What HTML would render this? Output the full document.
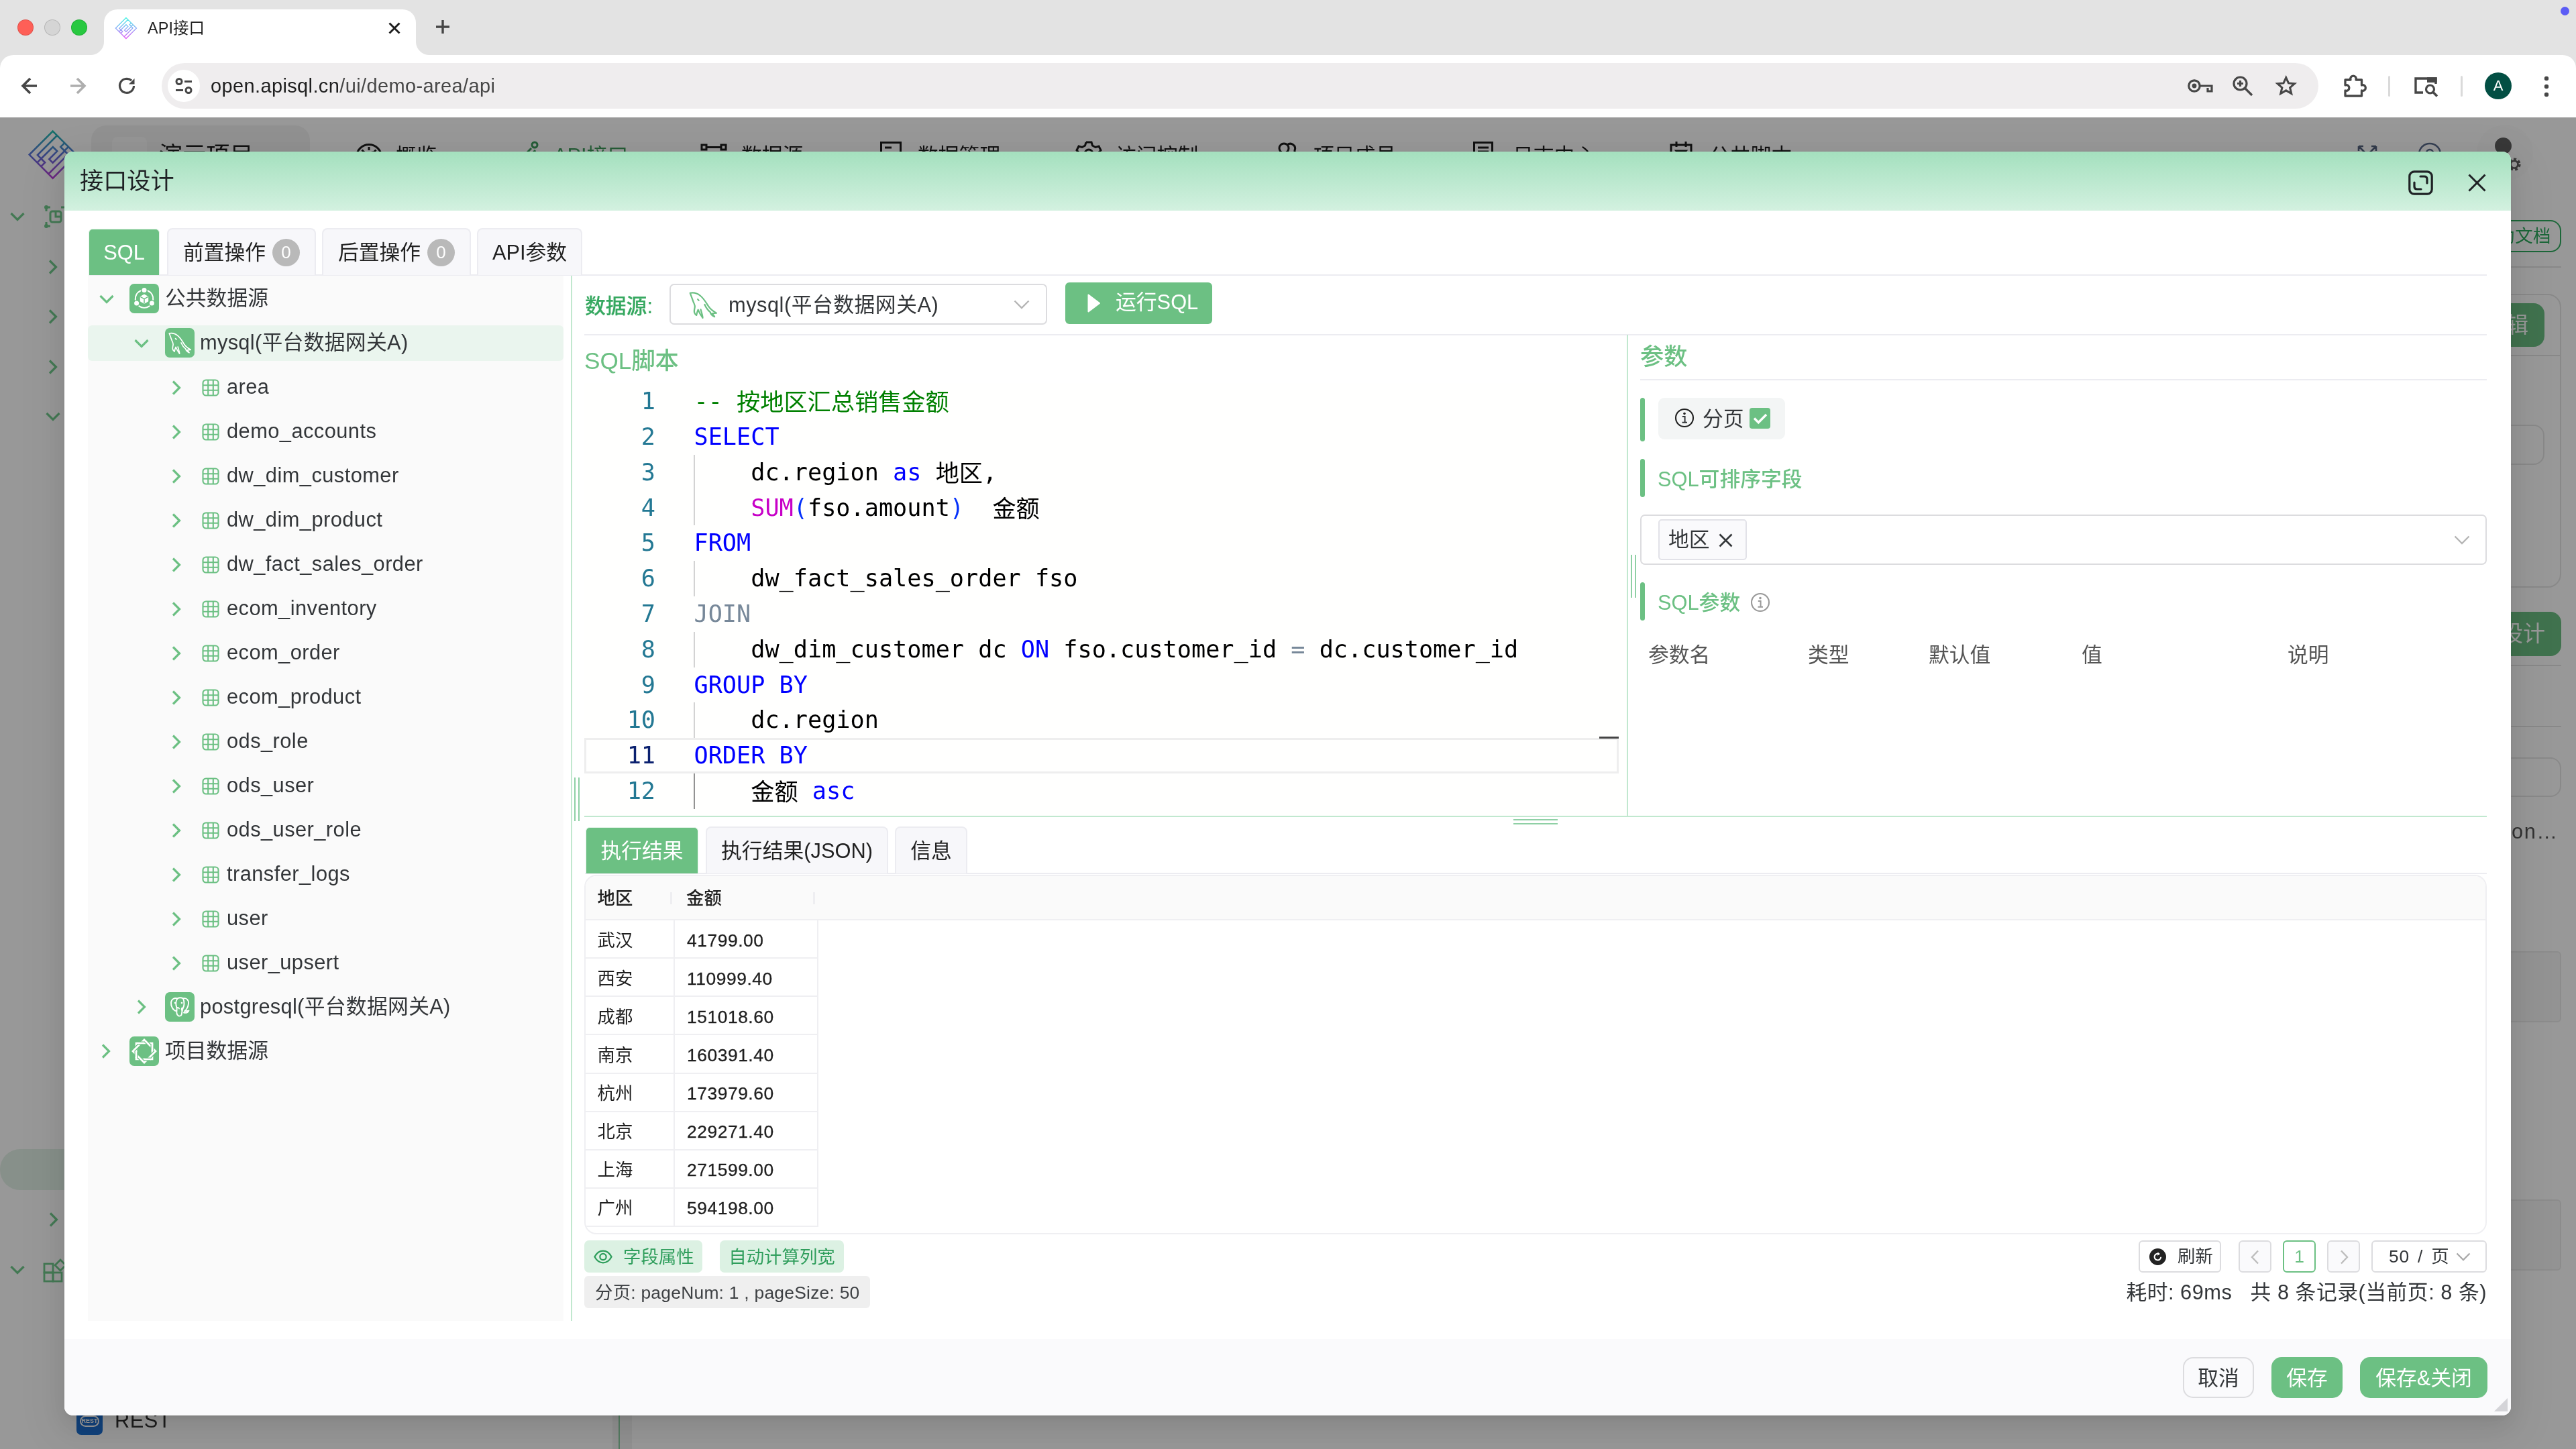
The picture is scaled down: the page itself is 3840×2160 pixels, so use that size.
<!DOCTYPE html>
<html lang="zh-CN">
<head>
<meta charset="utf-8">
<title>API接口</title>
<style>
*{box-sizing:border-box;margin:0;padding:0}
html,body{width:3840px;height:2160px;overflow:hidden;background:#fff}
body{position:relative;font-family:"Liberation Sans","Noto Sans CJK SC",sans-serif;color:#222;font-size:30.8px;-webkit-font-smoothing:antialiased}
#root{position:absolute;left:0;top:0;width:3840px;height:2160px;will-change:transform}
.abs{position:absolute}
svg{display:block;overflow:visible}
.fx{display:flex;align-items:center}
/* ---------- browser chrome ---------- */
#tabbar{position:absolute;left:0;top:0;width:3840px;height:110px;background:#e3e3e3}
#toolbar{position:absolute;left:0;top:82px;width:3840px;height:93px;background:#fff;border-radius:20px 20px 0 0}
#tab{position:absolute;left:155px;top:14px;width:465px;height:68px;background:#fff;border-radius:20px 20px 0 0}
#tab:before,#tab:after{content:"";position:absolute;bottom:0;width:20px;height:20px;background:radial-gradient(circle at 0 0,transparent 19.5px,#fff 20.5px)}
#tab:before{left:-20px}
#tab:after{right:-20px;background:radial-gradient(circle at 100% 0,transparent 19.5px,#fff 20.5px)}
.tl{position:absolute;top:29px;width:24px;height:24px;border-radius:50%}
#omni{position:absolute;left:241px;top:94px;width:3215px;height:68px;border-radius:34px;background:#efedee}
#url{position:absolute;left:314px;top:94px;height:68px;line-height:68px;font-size:29px;color:#474747;letter-spacing:0.37px}
#url b{font-weight:normal;color:#1f1f1f}
/* ---------- page under mask ---------- */
#page{position:absolute;left:0;top:175px;width:3840px;height:1985px;background:#fff;overflow:hidden}
#mask{position:absolute;left:0;top:175px;width:3840px;height:1985px;background:rgba(0,0,0,.405)}
.nav{position:absolute;top:32px;height:50px;line-height:50px;font-size:35.2px;color:#1f1f1f;white-space:nowrap}
/* ---------- modal ---------- */
#modal{position:absolute;left:96px;top:226px;width:3647px;height:1884px;background:#fff;border-radius:13px;overflow:hidden;box-shadow:0 7px 13px -9px rgba(0,0,0,.12),0 13px 35px 0 rgba(0,0,0,.08),0 20px 62px 18px rgba(0,0,0,.05)}
#mhead{position:absolute;left:0;top:0;width:100%;height:88px;background:linear-gradient(#a4e0be,#d3f1e0)}
#mtitle{position:absolute;left:23px;top:0;height:88px;line-height:88px;font-size:35.2px;color:#1f2225}
#mfoot{position:absolute;left:0;top:1770px;width:100%;height:114px;background:#fafafc}

/* ---------- modal content (global coords via #mc) ---------- */
#mc{position:absolute;left:-96px;top:-226px;width:3840px;height:2160px}
#mc>div,#mc>svg{position:absolute}
.tab{top:340px;height:70px;border:2px solid #ececf1;border-bottom:none;background:#f7f7fa;border-radius:8px 8px 0 0;line-height:70px;text-align:center;color:#222;white-space:nowrap}
.tab.on{background:#6cc083;color:#fff;border-color:#e4f3e9;border-width:1px 1px 0 1px;top:341px;height:69px;line-height:70px;border-radius:6px 6px 0 0}
.badge{display:inline-block;width:41px;height:41px;border-radius:50%;background:#b9b9b9;color:#fff;line-height:41px;font-size:26px;text-align:center;vertical-align:middle;margin:-4px 0 0 10px}
#tree{left:131px;top:411px;width:709px;height:1558px;background:#fafafa;padding-top:1px}
.tr{position:relative;height:66px;white-space:nowrap}
.tr.sel:before{content:"";position:absolute;left:0;top:7px;width:709px;height:53px;background:#eaf5ee;border-radius:6px}
.tr .t{position:absolute;top:0;line-height:66px;color:#333639;letter-spacing:.45px}
.l0 .t{letter-spacing:0;margin-left:-1px}.l1 .t{letter-spacing:.3px;margin-left:0}
.tr svg,.tr .ib{position:absolute}
.ib{top:11px;width:44px;height:44px;border-radius:7px;background:#6cc083}
.l0 .cv{left:17px}.l0 .ib{left:62px}.l0 .t{left:116px}
.l1 .cv{left:69px}.l1 .ib{left:115px}.l1 .t{left:167px}
.l2 .cv{left:125px;top:23px}.l2 .tb{left:170px;top:21px}.l2 .t{left:207px}
.cvd{top:27px}
.g{color:#6cc083}
.hl{background:#ececf1;height:2px}

/* editor */
#code{left:871px;top:572.2px;width:1541px;height:634px;font-family:"DejaVu Sans Mono","Noto Sans CJK SC",monospace;font-size:35.2px;line-height:52.8px;color:#000}
#code .ln{position:relative;height:52.8px}
#code .n{position:absolute;left:0;top:0;width:106px;text-align:right;color:#237893}
#code .c{position:absolute;left:163.5px;top:0;white-space:pre}
#code .ig:before{content:"";position:absolute;left:163px;top:0;width:2px;height:52.8px;background:#d3d3d3}
#code .ig.act:before{background:#939393}
.zh{position:relative;top:2px}.k{color:#0000ff}.cm{color:#008000}.fn{color:#c700c7}.op{color:#778899}.br{color:#0431fa}
.gbar{width:7px;border-radius:4px;background:#6cc083}
.sec{font-weight:500;margin-top:1.5px;color:#6cc083;white-space:nowrap;line-height:56px;height:56px}
.th{color:#555;white-space:nowrap;line-height:50px;height:50px;top:952px}

/* results */
.rtab{top:1232px;height:70px;border:2px solid #ececf1;border-bottom:none;background:#f7f7fa;border-radius:8px 8px 0 0;line-height:69px;text-align:center;color:#222;white-space:nowrap}
.rtab.on{background:#6cc083;color:#fff;border-color:#e4f3e9;border-width:1px 1px 0 1px;top:1233px;height:69px;line-height:69px;border-radius:6px 6px 0 0}
#grid{left:870.500px;top:1304px;width:2836.500px;height:536px;border:2px solid #efeff2;border-radius:18px;background:#fff;overflow:hidden;font-size:26.4px}
#ghead{position:absolute;left:0;top:0;width:100%;height:66px;background:#fafafa;border-bottom:2px solid #efeff2}
#ghead span{position:absolute;top:0;line-height:66px;font-weight:500;color:#1f1f1f}
#ghead i{position:absolute;top:24px;width:3px;height:18px;background:#eeeef1}
.gr{position:absolute;left:0;width:347.500px;height:57.14px;border-bottom:2px solid #efeff2;border-right:2px solid #efeff2}
.gr span{position:absolute;top:1.5px;line-height:57px;color:#1f1f1f}
.gr span+i+span{letter-spacing:.55px;-webkit-text-stroke:.3px #1f1f1f}
.gr i{position:absolute;left:131.500px;top:0;width:2px;height:100%;background:#efeff2}
.btnl{height:48px;border-radius:7px;background:#dcf1e3;color:#2f9e5c;line-height:51px;white-space:nowrap;font-size:26.4px}
.pbtn{top:1849px;height:48px;border:2px solid #dcdcdf;border-radius:6px;background:#fff}
.fbtn{top:2023px;height:61px;border-radius:15px;line-height:63px;text-align:center;white-space:nowrap;font-size:30.8px}

.l0 .cvr{left:20px;top:22px}.l1 .cvr{left:73px;top:22px}
/* page bg */
#pg{position:absolute;left:0;top:-175px;width:3840px;height:2160px}
#pg>div,#pg>svg{position:absolute}
.nv{top:208px;height:50px;line-height:50px;font-size:30.8px;color:#1f1f1f;white-space:nowrap}
.gbtn{background:#6cc083;color:#fff;border-radius:16px;white-space:nowrap;text-align:right;font-size:33px}
.obox{border:2px solid #e6e6e6;border-radius:16px}
</style>
</head>
<body>
<div id="root">
<!-- ================= BROWSER CHROME ================= -->
<div id="tabbar">
  <div class="tl" style="left:26px;background:#fe5f57;box-shadow:inset 0 0 0 1px rgba(0,0,0,.12)"></div>
  <div class="tl" style="left:66px;background:#d5d5d5;box-shadow:inset 0 0 0 1px rgba(0,0,0,.14)"></div>
  <div class="tl" style="left:106px;background:#28c840;box-shadow:inset 0 0 0 1px rgba(0,0,0,.12)"></div>
  <div id="tab"></div>
</div>
<div id="toolbar"></div>
<div id="omni"></div>

<!-- tab content -->
<svg class="abs" style="left:171px;top:25px" width="34" height="34" viewBox="0 0 34 34"><defs><linearGradient id="fg" gradientUnits="userSpaceOnUse" x1="0" y1="0" x2="22" y2="22"><stop offset="0" stop-color="#49f5e3"/><stop offset=".5" stop-color="#90b2f8"/><stop offset="1" stop-color="#e45cf6"/></linearGradient></defs><g transform="translate(16.900,1.400) rotate(45)"><path d="M0 0H22V22H0ZM4 0V18.300H7.400M7.400 18.300H11V22M7.400 18.300V22M7.400 18.300V7.300H11.400V14.800H14.800V3.700M18 22V3.700H14.600M14.600 3.700H11V0M14.600 3.700V0" fill="none" stroke="url(#fg)" stroke-width="1.400" stroke-linejoin="miter"/></g></svg>
<div class="abs" style="left:220px;top:14px;height:56px;line-height:56px;font-size:23.400px;color:#1f1f1f;letter-spacing:.1px">API接口</div>
<svg class="abs" style="left:579px;top:33px" width="18" height="18" viewBox="0 0 18 18"><path d="M1.500 1.500 16.500 16.500M16.500 1.500 1.500 16.500" stroke="#1f1f1f" stroke-width="2.900" fill="none"/></svg>
<svg class="abs" style="left:649px;top:29px" width="22" height="22" viewBox="0 0 22 22"><path d="M11 1V21M1 11H21" stroke="#474747" stroke-width="3.4" fill="none"/></svg>
<div class="abs" style="left:3817px;top:10px;width:13px;height:13px;border-radius:50%;background:#5b5cf5"></div>
<!-- toolbar icons -->
<svg class="abs" style="left:31px;top:113px" width="26" height="30" viewBox="0 0 26 30"><path d="M24 15H3M14 4 3 15 14 26" stroke="#474747" stroke-width="3.6" fill="none" stroke-linejoin="miter"/></svg>
<svg class="abs" style="left:103px;top:113px" width="26" height="30" viewBox="0 0 26 30"><path d="M2 15H23M12 4 23 15 12 26" stroke="#aeaeae" stroke-width="3.6" fill="none"/></svg>
<svg class="abs" style="left:175px;top:114px" width="28" height="28" viewBox="0 0 28 28"><path d="M24.500 14A10.500 10.500 0 1 1 21 6" stroke="#474747" stroke-width="3.200" fill="none"/><path d="M25.500 3V11.500H17Z" fill="#474747"/></svg>
<div class="abs" style="left:250px;top:104px;width:48px;height:48px;border-radius:50%;background:#fff"></div>
<svg class="abs" style="left:261px;top:116px" width="26" height="24" viewBox="0 0 26 24"><g stroke="#474747" stroke-width="3" fill="none"><circle cx="6" cy="5.5" r="4"/><path d="M14 5.5H25"/><circle cx="20" cy="18.5" r="4"/><path d="M1 18.5H12"/></g></svg>
<!-- right icons -->
<svg class="abs" style="left:3261px;top:115px" width="38" height="26" viewBox="0 0 38 26"><g fill="none" stroke="#474747" stroke-width="3.2"><circle cx="10" cy="13" r="8.2"/><path d="M18 13H36V21H30V16"/></g><circle cx="10" cy="13" r="3.4" fill="#474747"/></svg>
<svg class="abs" style="left:3327px;top:112px" width="32" height="32" viewBox="0 0 32 32"><g fill="none" stroke="#474747" stroke-width="3.2"><circle cx="12.5" cy="12.5" r="9.5"/><path d="M19.5 19.5 30 30M8 12.5H17M12.5 8V17"/></g></svg>
<svg class="abs" style="left:3393px;top:113px" width="29.500" height="28.500" viewBox="0 0 34 33"><path d="M17 3 21.3 12.6 31.7 13.6 23.8 20.5 26.2 30.7 17 25.3 7.8 30.7 10.2 20.5 2.3 13.6 12.7 12.6Z" fill="none" stroke="#474747" stroke-width="3.500" stroke-linejoin="miter"/></svg>
<svg class="abs" style="left:3492px;top:108px" width="36" height="38" viewBox="0 0 36 38"><path d="M4 11H12A4.300 4.300 0 1 1 20 11H28.500V19A4.300 4.300 0 1 1 28.500 27V35H4V27A4.300 4.300 0 1 0 4 19Z" fill="none" stroke="#474747" stroke-width="3.300" stroke-linejoin="round"/></svg>
<div class="abs" style="left:3560px;top:113px;width:3px;height:31px;background:#dadada;border-radius:2px"></div>
<svg class="abs" style="left:3598px;top:113px" width="38" height="32" viewBox="0 0 38 32"><path d="M14 25H3V4H33V12" fill="none" stroke="#474747" stroke-width="3.4"/><path d="M20 2.3H34.7V10H20Z" fill="#474747"/><circle cx="24.5" cy="20" r="6" fill="none" stroke="#474747" stroke-width="3.2"/><path d="M29 24.5 35 30.5" stroke="#474747" stroke-width="3.6"/></svg>
<div class="abs" style="left:3668px;top:113px;width:3px;height:31px;background:#dadada;border-radius:2px"></div>
<div class="abs" style="left:3704px;top:108px;width:40px;height:40px;border-radius:50%;background:#034f44;color:#fff;font-size:22px;line-height:40px;text-align:center">A</div>
<svg class="abs" style="left:3791px;top:113px" width="10" height="32" viewBox="0 0 10 32"><g fill="#474747"><circle cx="5" cy="4" r="3.2"/><circle cx="5" cy="16" r="3.2"/><circle cx="5" cy="28" r="3.2"/></g></svg>
<div id="url"><b>open.apisql.cn</b>/ui/demo-area/api</div>

<!-- ================= PAGE (dimmed) ================= -->
<div id="page"><div id="pg">
  <!-- logo -->
  <svg style="left:42px;top:193px" width="74" height="74" viewBox="0 0 74 74"><defs><linearGradient id="lg" gradientUnits="userSpaceOnUse" x1="0" y1="0" x2="22" y2="22"><stop offset="0" stop-color="#22c0b0"/><stop offset=".5" stop-color="#5c74dc"/><stop offset="1" stop-color="#bb3fd8"/></linearGradient></defs><g transform="translate(36.700,2.600) rotate(45) scale(2.250)"><path d="M0 0H22V22H0ZM4 0V18.300H7.400M7.400 18.300H11V22M7.400 18.300V22M7.400 18.300V7.300H11.400V14.800H14.800V3.700M18 22V3.700H14.600M14.600 3.700H11V0M14.600 3.700V0" fill="none" stroke="url(#lg)" stroke-width="1.150"/></g></svg>
  <!-- project switcher -->
  <div style="left:136px;top:187px;width:326px;height:90px;border-radius:22px;background:#f3f3f3"></div>
  <div style="left:167px;top:204px;width:52px;height:52px;border-radius:8px;background:#fafafa"></div>
  <div class="nv" style="left:237px;font-size:35.2px;top:207px">演示项目</div>
  <div style="left:404px;top:229px;width:20px;height:3px;background:#1f1f1f"></div>
  <!-- nav -->
  <svg style="left:529px;top:213px" width="42" height="42" viewBox="0 0 42 42"><g fill="none" stroke="#1f1f1f" stroke-width="3"><circle cx="21" cy="21" r="18.500"/><path d="M21 6V11M10.500 10.500 14 14M31.500 10.500 28 14M21 21 27 13"/></g></svg>
  <div class="nv" style="left:590px">概览</div>
  <svg style="left:768px;top:210px" width="40" height="44" viewBox="0 0 40 44"><g fill="none" stroke="#3f9c5d" stroke-width="3"><path d="M5 30 24 11"/><circle cx="29" cy="6" r="4"/><path d="M3 40C8 28 20 26 30 14"/></g></svg>
  <div class="nv" style="left:825px;color:#3f9c5d">API接口</div>
  <svg style="left:1044px;top:214px" width="40" height="30" viewBox="0 0 40 30"><g fill="none" stroke="#1f1f1f" stroke-width="3"><rect x="2" y="2" width="7" height="7"/><rect x="31" y="2" width="7" height="7"/><path d="M9 5.500H31"/></g></svg>
  <div class="nv" style="left:1105px">数据源</div>
  <svg style="left:1312px;top:211px" width="32" height="40" viewBox="0 0 32 40"><g fill="none" stroke="#1f1f1f" stroke-width="3"><rect x="1.500" y="1.500" width="29" height="34"/><path d="M7 9H17"/></g></svg>
  <div class="nv" style="left:1368px">数据管理</div>
  <svg style="left:1604px;top:210px" width="38" height="40" viewBox="0 0 38 40"><g fill="none" stroke="#1f1f1f" stroke-width="3"><path d="M15 2H23L24.500 7 29 9.500 34 8 37 14 33 18V22"/><path d="M15 2 13.500 7 9 9.500 4 8 1 14 5 18V22"/><circle cx="19" cy="19" r="6"/></g></svg>
  <div class="nv" style="left:1663px">访问控制</div>
  <svg style="left:1903px;top:212px" width="32" height="36" viewBox="0 0 32 36"><g fill="none" stroke="#1f1f1f" stroke-width="3"><circle cx="11" cy="9" r="7"/><path d="M16 4A7 7 0 0 1 27 12V20"/></g></svg>
  <div class="nv" style="left:1958px">项目成员</div>
  <svg style="left:2196px;top:211px" width="30" height="40" viewBox="0 0 30 40"><g fill="none" stroke="#1f1f1f" stroke-width="3"><rect x="1.500" y="1.500" width="27" height="36"/><path d="M7 9H23M7 15H23"/></g></svg>
  <div class="nv" style="left:2255px">日志中心</div>
  <svg style="left:2489px;top:209px" width="34" height="40" viewBox="0 0 34 40"><g fill="none" stroke="#1f1f1f" stroke-width="3"><path d="M2 7H32V38H2Z"/><path d="M10 2V10M24 2V10M10 16 24 16 17 24Z"/></g></svg>
  <div class="nv" style="left:2548px">公共脚本</div>
  <svg style="left:3513px;top:215px" width="32" height="32" viewBox="0 0 32 32"><g fill="none" stroke="#566580" stroke-width="2.600"><path d="M3 3 13 13M29 3 19 13M3 3H10M3 3V10M29 3H22M29 3V10"/></g></svg>
  <svg style="left:3604px;top:212px" width="36" height="36" viewBox="0 0 36 36"><g fill="none" stroke="#5c6c8c" stroke-width="2.600"><circle cx="18" cy="18" r="16"/><circle cx="18" cy="16" r="5"/></g></svg>
  <div style="left:3692px;top:186px;width:84px;height:84px;border-radius:50%;background:#fcfcfc"></div>
  <div style="left:3719px;top:205px;width:25px;height:25px;border-radius:50%;background:#5e5e5e"></div>
  <svg style="left:3737px;top:234px" width="22" height="22" viewBox="0 0 24 24"><g fill="none" stroke="#606060" stroke-width="5" stroke-dasharray="4 3.300"><circle cx="12" cy="12" r="8"/></g><circle cx="12" cy="12" r="6" fill="none" stroke="#606060" stroke-width="3"/></svg>
  <!-- left sidebar -->
  <svg style="left:15px;top:316px" width="22" height="14" viewBox="0 0 22 14"><path d="M1.5 2 11 11.500 20.500 2" fill="none" stroke="#72cc8e" stroke-width="3.2"/></svg>
  <svg style="left:66px;top:306px" width="34" height="34" viewBox="0 0 34 34"><g fill="none" stroke="#72cc8e" stroke-width="3"><rect x="9" y="9" width="16" height="16" rx="3"/><path d="M9 3H3V9M3 25V31H9M25 3H31"/><path d="M17 9V17H25"/></g><g fill="#72cc8e"><circle cx="3" cy="3" r="3"/><circle cx="3" cy="31" r="3"/></g></svg>
  <svg style="left:72px;top:387px" width="14" height="22" viewBox="0 0 14 22"><path d="M2 1.5 11.5 11 2 20.500" fill="none" stroke="#72cc8e" stroke-width="3.2"/></svg><svg style="left:72px;top:461px" width="14" height="22" viewBox="0 0 14 22"><path d="M2 1.5 11.5 11 2 20.500" fill="none" stroke="#72cc8e" stroke-width="3.2"/></svg><svg style="left:72px;top:536px" width="14" height="22" viewBox="0 0 14 22"><path d="M2 1.5 11.5 11 2 20.500" fill="none" stroke="#72cc8e" stroke-width="3.2"/></svg><svg style="left:68px;top:614px" width="22" height="14" viewBox="0 0 22 14"><path d="M1.5 2 11 11.500 20.500 2" fill="none" stroke="#72cc8e" stroke-width="3.2"/></svg>
  <div style="left:0;top:1713px;width:300px;height:61px;border-radius:30px;background:#e3f1e7"></div>
  <svg style="left:73px;top:1807px" width="14" height="22" viewBox="0 0 14 22"><path d="M2 1.5 11.5 11 2 20.500" fill="none" stroke="#72cc8e" stroke-width="3.2"/></svg><svg style="left:15px;top:1886px" width="22" height="14" viewBox="0 0 22 14"><path d="M1.5 2 11 11.500 20.500 2" fill="none" stroke="#72cc8e" stroke-width="3.2"/></svg>
  <svg style="left:64px;top:1876px" width="36" height="36" viewBox="0 0 36 36"><g fill="none" stroke="#72cc8e" stroke-width="2.800"><rect x="2" y="8" width="13" height="13"/><rect x="2" y="21" width="13" height="13"/><rect x="15" y="21" width="13" height="13"/><path d="M18 10 26 2 34 10 26 18Z"/></g></svg>
  <div style="left:114px;top:2100px;width:39px;height:39px;border-radius:7px;background:#1e6fd0"></div>
  <div style="left:119px;top:2110px;width:29px;height:17px;border:2px solid #fff;border-radius:9px;color:#fff;font-size:9px;line-height:13px;text-align:center;font-weight:bold">REST</div>
  <div style="left:171px;top:2093px;height:50px;line-height:50px;font-size:30.8px;color:#333;letter-spacing:.5px">REST</div>
  <div style="left:913px;top:2100px;width:29px;height:60px;background:#f4f4f4"></div>
  <div style="left:922px;top:2100px;width:2px;height:60px;background:#8fcfa4"></div>
  <!-- right sidebar -->
  <div class="obox" style="left:3560px;top:328px;width:258px;height:48px;border-color:#2fae60;border-radius:16px;color:#2fae60;font-size:26.400px;line-height:44px;text-align:right;padding-right:13px;white-space:nowrap;letter-spacing:.5px">帮助文档</div>
  <div style="left:3700px;top:397px;width:118px;height:2px;background:#e4e4e4"></div>
  <div class="obox" style="left:3500px;top:438px;width:318px;height:438px;border-radius:20px"></div>
  <div style="left:3700px;top:529px;width:116px;height:2px;background:#e4e4e4"></div>
  <div class="gbtn" style="left:3600px;top:452px;width:193px;height:65px;line-height:65px;padding-right:24px">编辑</div>
  <div class="obox" style="left:3500px;top:633px;width:293px;height:60px"></div>
  <div class="gbtn" style="left:3600px;top:912px;width:218px;height:66px;line-height:66px;padding-right:24px">设计</div>
  <div style="left:3700px;top:991px;width:118px;height:2px;background:#e4e4e4"></div>
  <div style="left:3700px;top:1082px;width:118px;height:2px;background:#e4e4e4"></div>
  <div class="obox" style="left:3500px;top:1129px;width:318px;height:59px"></div>
  <div style="left:3744px;top:1215px;height:50px;line-height:50px;font-size:30.8px;color:#555;white-space:nowrap;letter-spacing:1.5px">on…</div>
  <div class="obox" style="left:3500px;top:1418px;width:318px;height:106px;border-radius:6px;background:#f7f7f7;border-color:#ebebeb"></div>
  <div class="obox" style="left:3500px;top:1788px;width:318px;height:106px;border-radius:6px;background:#f7f7f7;border-color:#ebebeb"></div>
</div></div>
<div id="mask"></div>

<!-- ================= MODAL ================= -->
<div id="modal">
  <div id="mhead"><div id="mtitle">接口设计</div></div>
  <div id="mfoot"></div>
<div id="mc">
  <!-- header buttons -->
  <svg style="left:3590px;top:254px" width="37" height="37" viewBox="0 0 37 37"><g fill="none" stroke="#1f2225" stroke-width="3.2"><rect x="1.8" y="1.8" width="33.4" height="33.4" rx="7"/><path d="M18 9H24Q28 9 28 13V19M19 28H13Q9 28 9 24V18" stroke-linecap="round"/></g></svg>
  <svg style="left:3679px;top:259px" width="27" height="27" viewBox="0 0 27 27"><path d="M1.5 1.5 25.5 25.5M25.5 1.5 1.5 25.5" stroke="#1f2225" stroke-width="3" fill="none"/></svg>
  <!-- top tabs -->
  <div class="hl" style="left:132px;top:409px;width:3575px"></div>
  <div class="tab on" style="left:132px;width:106px">SQL</div>
  <div class="tab" style="left:249px;width:222px">前置操作<span class="badge">0</span></div>
  <div class="tab" style="left:480px;width:222px">后置操作<span class="badge">0</span></div>
  <div class="tab" style="left:711px;width:157px">API参数</div>
  <!-- tree -->
  <div id="tree">
    <div class="tr l0"><svg class="cv cvd" width="22" height="14" viewBox="0 0 22 14"><path d="M1.5 2 11 11.5 20.5 2" fill="none" stroke="#6cc083" stroke-width="3.2"/></svg><div class="ib"><svg style="left:0;top:0" width="44" height="44" viewBox="0 0 44 44"><g fill="none" stroke="#fff" stroke-width="2.1" stroke-linecap="round"><path d="M27.6 10.5A13.300 13.300 0 0 1 35.200 23.600M29.600 33.400A13.300 13.300 0 0 1 14.400 33.400M8.800 23.600A13.300 13.300 0 0 1 16.400 10.500"/></g><g fill="#fff"><circle cx="22" cy="9.400" r="3.500"/><circle cx="33.400" cy="29" r="3.500"/><circle cx="10.600" cy="29" r="3.500"/><path d="M22 15.500 28.200 19.100V26.300L22 29.900 15.800 26.300V19.100Z"/></g><path d="M16.300 19.400 22 22.700 27.700 19.400M22 22.700V29.400" fill="none" stroke="#6cc083" stroke-width="1.500"/></svg></div><span class="t">公共数据源</span></div>
    <div class="tr l1 sel"><svg class="cv cvd" width="22" height="14" viewBox="0 0 22 14"><path d="M1.5 2 11 11.5 20.5 2" fill="none" stroke="#6cc083" stroke-width="3.2"/></svg><div class="ib"><svg style="left:0;top:0" width="44" height="44" viewBox="0 0 44 44"><path d="M6.300 8C10 7.300 15 8.300 18.600 11.200C23 14.600 26 20 28.500 24C30.500 27 33.500 29.800 38.200 32.300L33.200 32.800L36 36.800C33 35.500 31.200 33.500 30.800 31.200C28 29 25.500 25.500 24 22M6.300 8C7.500 11 8.500 14 10 18C11 21 12.600 22.600 12 25.500C11.400 28.300 10.900 30 11.500 31.600C12 33 13 34.500 14 35C14.500 32.600 15 30.500 16 28.300C17 31 18.600 34.200 21.600 38.200C21.600 35 20 31.500 19.200 28M15.600 15.600 16.800 17" fill="none" stroke="#fff" stroke-width="1.700" stroke-linecap="round" stroke-linejoin="round"/></svg></div><span class="t">mysql(平台数据网关A)</span></div>
    <div class="tr l2"><svg class="cv" width="14" height="22" viewBox="0 0 14 22"><path d="M2 1.5 11.5 11 2 20.5" fill="none" stroke="#6cc083" stroke-width="3.2"/></svg><svg class="tb" width="26" height="26" viewBox="0 0 26 26"><g fill="none" stroke="#6cc083" stroke-width="2.1"><rect x="1.5" y="1.5" width="23" height="23" rx="4.5"/><path d="M9.2 1.5V24.5M16.8 1.5V24.5M1.5 9.2H24.5M1.5 16.8H24.5"/></g></svg><span class="t">area</span></div>
    <div class="tr l2"><svg class="cv" width="14" height="22" viewBox="0 0 14 22"><path d="M2 1.5 11.5 11 2 20.5" fill="none" stroke="#6cc083" stroke-width="3.2"/></svg><svg class="tb" width="26" height="26" viewBox="0 0 26 26"><g fill="none" stroke="#6cc083" stroke-width="2.1"><rect x="1.5" y="1.5" width="23" height="23" rx="4.5"/><path d="M9.2 1.5V24.5M16.8 1.5V24.5M1.5 9.2H24.5M1.5 16.8H24.5"/></g></svg><span class="t">demo_accounts</span></div>
    <div class="tr l2"><svg class="cv" width="14" height="22" viewBox="0 0 14 22"><path d="M2 1.5 11.5 11 2 20.5" fill="none" stroke="#6cc083" stroke-width="3.2"/></svg><svg class="tb" width="26" height="26" viewBox="0 0 26 26"><g fill="none" stroke="#6cc083" stroke-width="2.1"><rect x="1.5" y="1.5" width="23" height="23" rx="4.5"/><path d="M9.2 1.5V24.5M16.8 1.5V24.5M1.5 9.2H24.5M1.5 16.8H24.5"/></g></svg><span class="t">dw_dim_customer</span></div>
    <div class="tr l2"><svg class="cv" width="14" height="22" viewBox="0 0 14 22"><path d="M2 1.5 11.5 11 2 20.5" fill="none" stroke="#6cc083" stroke-width="3.2"/></svg><svg class="tb" width="26" height="26" viewBox="0 0 26 26"><g fill="none" stroke="#6cc083" stroke-width="2.1"><rect x="1.5" y="1.5" width="23" height="23" rx="4.5"/><path d="M9.2 1.5V24.5M16.8 1.5V24.5M1.5 9.2H24.5M1.5 16.8H24.5"/></g></svg><span class="t">dw_dim_product</span></div>
    <div class="tr l2"><svg class="cv" width="14" height="22" viewBox="0 0 14 22"><path d="M2 1.5 11.5 11 2 20.5" fill="none" stroke="#6cc083" stroke-width="3.2"/></svg><svg class="tb" width="26" height="26" viewBox="0 0 26 26"><g fill="none" stroke="#6cc083" stroke-width="2.1"><rect x="1.5" y="1.5" width="23" height="23" rx="4.5"/><path d="M9.2 1.5V24.5M16.8 1.5V24.5M1.5 9.2H24.5M1.5 16.8H24.5"/></g></svg><span class="t">dw_fact_sales_order</span></div>
    <div class="tr l2"><svg class="cv" width="14" height="22" viewBox="0 0 14 22"><path d="M2 1.5 11.5 11 2 20.5" fill="none" stroke="#6cc083" stroke-width="3.2"/></svg><svg class="tb" width="26" height="26" viewBox="0 0 26 26"><g fill="none" stroke="#6cc083" stroke-width="2.1"><rect x="1.5" y="1.5" width="23" height="23" rx="4.5"/><path d="M9.2 1.5V24.5M16.8 1.5V24.5M1.5 9.2H24.5M1.5 16.8H24.5"/></g></svg><span class="t">ecom_inventory</span></div>
    <div class="tr l2"><svg class="cv" width="14" height="22" viewBox="0 0 14 22"><path d="M2 1.5 11.5 11 2 20.5" fill="none" stroke="#6cc083" stroke-width="3.2"/></svg><svg class="tb" width="26" height="26" viewBox="0 0 26 26"><g fill="none" stroke="#6cc083" stroke-width="2.1"><rect x="1.5" y="1.5" width="23" height="23" rx="4.5"/><path d="M9.2 1.5V24.5M16.8 1.5V24.5M1.5 9.2H24.5M1.5 16.8H24.5"/></g></svg><span class="t">ecom_order</span></div>
    <div class="tr l2"><svg class="cv" width="14" height="22" viewBox="0 0 14 22"><path d="M2 1.5 11.5 11 2 20.5" fill="none" stroke="#6cc083" stroke-width="3.2"/></svg><svg class="tb" width="26" height="26" viewBox="0 0 26 26"><g fill="none" stroke="#6cc083" stroke-width="2.1"><rect x="1.5" y="1.5" width="23" height="23" rx="4.5"/><path d="M9.2 1.5V24.5M16.8 1.5V24.5M1.5 9.2H24.5M1.5 16.8H24.5"/></g></svg><span class="t">ecom_product</span></div>
    <div class="tr l2"><svg class="cv" width="14" height="22" viewBox="0 0 14 22"><path d="M2 1.5 11.5 11 2 20.5" fill="none" stroke="#6cc083" stroke-width="3.2"/></svg><svg class="tb" width="26" height="26" viewBox="0 0 26 26"><g fill="none" stroke="#6cc083" stroke-width="2.1"><rect x="1.5" y="1.5" width="23" height="23" rx="4.5"/><path d="M9.2 1.5V24.5M16.8 1.5V24.5M1.5 9.2H24.5M1.5 16.8H24.5"/></g></svg><span class="t">ods_role</span></div>
    <div class="tr l2"><svg class="cv" width="14" height="22" viewBox="0 0 14 22"><path d="M2 1.5 11.5 11 2 20.5" fill="none" stroke="#6cc083" stroke-width="3.2"/></svg><svg class="tb" width="26" height="26" viewBox="0 0 26 26"><g fill="none" stroke="#6cc083" stroke-width="2.1"><rect x="1.5" y="1.5" width="23" height="23" rx="4.5"/><path d="M9.2 1.5V24.5M16.8 1.5V24.5M1.5 9.2H24.5M1.5 16.8H24.5"/></g></svg><span class="t">ods_user</span></div>
    <div class="tr l2"><svg class="cv" width="14" height="22" viewBox="0 0 14 22"><path d="M2 1.5 11.5 11 2 20.5" fill="none" stroke="#6cc083" stroke-width="3.2"/></svg><svg class="tb" width="26" height="26" viewBox="0 0 26 26"><g fill="none" stroke="#6cc083" stroke-width="2.1"><rect x="1.5" y="1.5" width="23" height="23" rx="4.5"/><path d="M9.2 1.5V24.5M16.8 1.5V24.5M1.5 9.2H24.5M1.5 16.8H24.5"/></g></svg><span class="t">ods_user_role</span></div>
    <div class="tr l2"><svg class="cv" width="14" height="22" viewBox="0 0 14 22"><path d="M2 1.5 11.5 11 2 20.5" fill="none" stroke="#6cc083" stroke-width="3.2"/></svg><svg class="tb" width="26" height="26" viewBox="0 0 26 26"><g fill="none" stroke="#6cc083" stroke-width="2.1"><rect x="1.5" y="1.5" width="23" height="23" rx="4.5"/><path d="M9.2 1.5V24.5M16.8 1.5V24.5M1.5 9.2H24.5M1.5 16.8H24.5"/></g></svg><span class="t">transfer_logs</span></div>
    <div class="tr l2"><svg class="cv" width="14" height="22" viewBox="0 0 14 22"><path d="M2 1.5 11.5 11 2 20.5" fill="none" stroke="#6cc083" stroke-width="3.2"/></svg><svg class="tb" width="26" height="26" viewBox="0 0 26 26"><g fill="none" stroke="#6cc083" stroke-width="2.1"><rect x="1.5" y="1.5" width="23" height="23" rx="4.5"/><path d="M9.2 1.5V24.5M16.8 1.5V24.5M1.5 9.2H24.5M1.5 16.8H24.5"/></g></svg><span class="t">user</span></div>
    <div class="tr l2"><svg class="cv" width="14" height="22" viewBox="0 0 14 22"><path d="M2 1.5 11.5 11 2 20.5" fill="none" stroke="#6cc083" stroke-width="3.2"/></svg><svg class="tb" width="26" height="26" viewBox="0 0 26 26"><g fill="none" stroke="#6cc083" stroke-width="2.1"><rect x="1.5" y="1.5" width="23" height="23" rx="4.5"/><path d="M9.2 1.5V24.5M16.8 1.5V24.5M1.5 9.2H24.5M1.5 16.8H24.5"/></g></svg><span class="t">user_upsert</span></div>
    <div class="tr l1"><svg class="cv cvr" width="14" height="22" viewBox="0 0 14 22"><path d="M2 1.5 11.5 11 2 20.5" fill="none" stroke="#6cc083" stroke-width="3.2"/></svg><div class="ib"><svg style="left:5px;top:5px" width="34" height="34" viewBox="0 0 34 34"><g fill="none" stroke="#fff" stroke-width="1.900" stroke-linecap="round" stroke-linejoin="round"><path d="M11.5 23C7 22 3.5 16 4 10.5C4.5 5.5 9 3 13.5 4.5C16 3 19.5 3 22 4.5C26.5 3 30.5 6.5 30 12C29.5 17 27 21 24 23.5C27 23.5 29 23 30.5 22.5C29.5 25.5 26 26.5 23 25.5"/><path d="M13.5 4.5C11 8 11 14 12.5 18.5C13 21 12 23.5 12.5 26.5C13 30 16 31.5 18.5 30C20.5 28.5 20 25 20.5 22.5C21 19.5 23.5 17 23.5 12.5C23.5 9 23 6.5 22 4.5"/><path d="M12.5 18.5C14 17.5 15.5 18 16 19.5M20.5 22.5C19.5 21 19.5 19.5 20.5 18.5"/></g><circle cx="10" cy="11" r="1.3" fill="#fff"/><circle cx="20" cy="11" r="1.3" fill="#fff"/></svg></div><span class="t">postgresql(平台数据网关A)</span></div>
    <div class="tr l0"><svg class="cv cvr" width="14" height="22" viewBox="0 0 14 22"><path d="M2 1.5 11.5 11 2 20.5" fill="none" stroke="#6cc083" stroke-width="3.2"/></svg><div class="ib"><svg style="left:0;top:0" width="44" height="44" viewBox="0 0 44 44"><g fill="none"><path d="M10 10H34V34H10Z" stroke="#fff" stroke-width="2.700"/><path d="M22 5 39 22 22 39 5 22Z" stroke="#6cc083" stroke-width="5.200"/><path d="M22 5 39 22 22 39 5 22Z" stroke="#fff" stroke-width="2.700"/><path d="M34 13.200V20.800M30.800 34H23.200M10 30.800V23.200M13.200 10H20.800" stroke="#6cc083" stroke-width="5.200"/><path d="M34 12V22M32 34H22M10 32V22M12 10H22" stroke="#fff" stroke-width="2.700"/></g></svg></div><span class="t">项目数据源</span></div>
  </div>

  <!-- datasource row -->
  <div style="left:872px;top:428px;height:58px;line-height:58px;font-weight:500;-webkit-text-stroke:.15px #36a860;color:#36a860;white-space:nowrap">数据源:</div>
  <div style="left:998px;top:423px;width:563px;height:61px;border:2px solid #dcdcdf;border-radius:7px;background:#fff"></div>
  <svg style="left:1021px;top:427px" width="54" height="54" viewBox="0 0 44 44"><path d="M6.300 8C10 7.300 15 8.300 18.600 11.200C23 14.600 26 20 28.500 24C30.500 27 33.500 29.800 38.200 32.300L33.200 32.800L36 36.800C33 35.500 31.200 33.500 30.800 31.200C28 29 25.500 25.500 24 22M6.300 8C7.500 11 8.500 14 10 18C11 21 12.600 22.600 12 25.500C11.400 28.300 10.900 30 11.500 31.600C12 33 13 34.500 14 35C14.500 32.600 15 30.500 16 28.300C17 31 18.600 34.200 21.600 38.200C21.600 35 20 31.500 19.200 28M15.600 15.600 16.800 17" fill="none" stroke="#6cc083" stroke-width="1.800" stroke-linecap="round" stroke-linejoin="round"/></svg>
  <div style="left:1086px;top:424.500px;height:60px;line-height:60px;color:#333639;white-space:nowrap;letter-spacing:.5px">mysql(平台数据网关A)</div>
  <svg style="left:1511px;top:447px" width="24" height="14" viewBox="0 0 24 14"><path d="M1.5 1.5 12 12 22.5 1.5" fill="none" stroke="#b5b5b5" stroke-width="2.4"/></svg>
  <div style="left:1588px;top:421px;width:219px;height:62px;border-radius:6px;background:#6cc083"></div>
  <svg style="left:1621px;top:437px" width="20" height="30" viewBox="0 0 20 30"><path d="M1.5 2.5 18 15 1.5 27.5Z" fill="#fff" stroke="#fff" stroke-width="2" stroke-linejoin="round"/></svg>
  <div style="left:1663px;top:421px;height:62px;line-height:60px;color:#fff;white-space:nowrap">运行SQL</div>
  <div class="hl" style="left:871px;top:498px;width:2836px"></div>
  <div style="left:871px;top:510px;height:56px;line-height:56px;font-size:35.2px;font-weight:500;color:#6cc083;white-space:nowrap">SQL脚本</div>
  <!-- editor -->
  <div style="left:871px;top:571px;width:1554px;height:645px;background:#fffffe"></div>
  <div style="left:871px;top:1100px;width:1542px;height:53px;border:3px solid #eee"></div>
  <div style="left:2384px;top:1098px;width:29px;height:3px;background:#444"></div>
  <div id="code">
    <div class="ln"><span class="n">1</span><span class="c"><span class="cm">-- <span class="zh">按地区汇总销售金额</span></span></span></div>
    <div class="ln"><span class="n">2</span><span class="c"><span class="k">SELECT</span></span></div>
    <div class="ln ig"><span class="n">3</span><span class="c">    dc.region <span class="k">as</span> <span class="zh">地区</span>,</span></div>
    <div class="ln ig"><span class="n">4</span><span class="c">    <span class="fn">SUM</span><span class="br">(</span>fso.amount<span class="br">)</span>  <span class="zh">金额</span></span></div>
    <div class="ln"><span class="n">5</span><span class="c"><span class="k">FROM</span></span></div>
    <div class="ln ig"><span class="n">6</span><span class="c">    dw_fact_sales_order fso</span></div>
    <div class="ln"><span class="n">7</span><span class="c"><span class="op">JOIN</span></span></div>
    <div class="ln ig"><span class="n">8</span><span class="c">    dw_dim_customer dc <span class="k">ON</span> fso.customer_id <span class="op">=</span> dc.customer_id</span></div>
    <div class="ln"><span class="n">9</span><span class="c"><span class="k">GROUP BY</span></span></div>
    <div class="ln ig"><span class="n">10</span><span class="c">    dc.region</span></div>
    <div class="ln"><span class="n" style="color:#0b216f">11</span><span class="c"><span class="k">ORDER BY</span></span></div>
    <div class="ln ig act"><span class="n">12</span><span class="c">    <span class="zh">金额</span> <span class="k">asc</span></span></div>
  </div>
  <div style="left:871px;top:1216px;width:2836px;height:2px;background:#c1e8cf"></div>
  <div style="left:2256px;top:1221px;width:66px;height:2px;background:#8fd0a5"></div>
  <div style="left:2256px;top:1227px;width:66px;height:2px;background:#8fd0a5"></div>
  <!-- params panel -->
  <div style="left:2425px;top:499px;width:2px;height:718px;background:#c1e8cf"></div>
  <div style="left:2431px;top:827px;width:2px;height:64px;background:#8fd0a5"></div>
  <div style="left:2437px;top:827px;width:2px;height:64px;background:#8fd0a5"></div>
  <div style="left:2445px;top:504px;height:56px;line-height:56px;font-size:35.2px;font-weight:500;color:#6cc083;white-space:nowrap">参数</div>
  <div class="hl" style="left:2445px;top:565px;width:1262px"></div>
  <div class="gbar" style="left:2445px;top:593px;height:65px"></div>
  <div style="left:2472px;top:593px;width:189px;height:62px;border-radius:9px;background:#f3f5f5"></div>
  <svg style="left:2496px;top:608px" width="30" height="30" viewBox="0 0 30 30"><circle cx="15" cy="15" r="13" fill="none" stroke="#222" stroke-width="2.1"/><circle cx="15" cy="8.6" r="1.8" fill="#222"/><path d="M11.8 13H15.6V21.5M11.5 21.8H19" fill="none" stroke="#333639" stroke-width="2"/></svg>
  <div style="left:2538px;top:594px;height:61px;line-height:62px;white-space:nowrap;color:#333639">分页</div>
  <div style="left:2608px;top:608px;width:31px;height:31px;border-radius:4px;background:#6cc083"></div>
  <svg style="left:2613px;top:615px" width="22" height="18" viewBox="0 0 22 18"><path d="M2 8.5 8.3 14.8 20 3" fill="none" stroke="#fff" stroke-width="3.4"/></svg>
  <div class="gbar" style="left:2445px;top:684px;height:57px"></div>
  <div class="sec" style="left:2471px;top:685px">SQL可排序字段</div>
  <div style="left:2445px;top:767px;width:1262px;height:75px;border:2px solid #dcdcdf;border-radius:7px;background:#fff"></div>
  <div style="left:2472px;top:774px;width:132px;height:61px;border:2px solid #e2e2e8;border-radius:5px;background:#fafafc"></div>
  <div style="left:2487px;top:775px;height:60px;line-height:60px;white-space:nowrap;color:#333639">地区</div>
  <svg style="left:2562px;top:795px" width="21" height="21" viewBox="0 0 21 21"><path d="M1.5 1.5 19.5 19.5M19.5 1.5 1.5 19.5" fill="none" stroke="#333639" stroke-width="2.6"/></svg>
  <svg style="left:3658px;top:798px" width="24" height="14" viewBox="0 0 24 14"><path d="M1.5 1.5 12 12 22.5 1.5" fill="none" stroke="#b5b5b5" stroke-width="2.4"/></svg>
  <div class="gbar" style="left:2445px;top:868px;height:57px"></div>
  <div class="sec" style="left:2471px;top:869px">SQL参数</div>
  <svg style="left:2609px;top:883px" width="30" height="30" viewBox="0 0 30 30"><circle cx="15" cy="15" r="13" fill="none" stroke="#999" stroke-width="2.1"/><circle cx="15" cy="8.6" r="1.8" fill="#999"/><path d="M11.8 13H15.6V21.5M11.5 21.8H19" fill="none" stroke="#999" stroke-width="2"/></svg>
  <div class="th" style="left:2457px">参数名</div>
  <div class="th" style="left:2695px">类型</div>
  <div class="th" style="left:2875px">默认值</div>
  <div class="th" style="left:3103px">值</div>
  <div class="th" style="left:3410px">说明</div>

  <!-- result tabs -->
  <div class="hl" style="left:872px;top:1301px;width:2835px"></div>
  <div class="rtab on" style="left:873px;width:168px">执行结果</div>
  <div class="rtab" style="left:1052px;width:272px">执行结果(JSON)</div>
  <div class="rtab" style="left:1334px;width:108px">信息</div>
  <div id="grid">
    <div id="ghead"><span style="left:18px">地区</span><i style="left:126.500px"></i><span style="left:150.500px">金额</span><i style="left:339.500px"></i></div>
    <div class="gr" style="top:66.00px"><span style="left:18px">武汉</span><i></i><span style="left:151.500px">41799.00</span></div>
    <div class="gr" style="top:123.14px"><span style="left:18px">西安</span><i></i><span style="left:151.500px">110999.40</span></div>
    <div class="gr" style="top:180.28px"><span style="left:18px">成都</span><i></i><span style="left:151.500px">151018.60</span></div>
    <div class="gr" style="top:237.42px"><span style="left:18px">南京</span><i></i><span style="left:151.500px">160391.40</span></div>
    <div class="gr" style="top:294.56px"><span style="left:18px">杭州</span><i></i><span style="left:151.500px">173979.60</span></div>
    <div class="gr" style="top:351.70px"><span style="left:18px">北京</span><i></i><span style="left:151.500px">229271.40</span></div>
    <div class="gr" style="top:408.84px"><span style="left:18px">上海</span><i></i><span style="left:151.500px">271599.00</span></div>
    <div class="gr" style="top:465.98px"><span style="left:18px">广州</span><i></i><span style="left:151.500px">594198.00</span></div>
  </div>
  <!-- bottom bar -->
  <div class="btnl" style="left:871px;top:1849px;width:176px"></div>
  <svg style="left:885px;top:1863px" width="28" height="21" viewBox="0 0 30 22"><g fill="none" stroke="#2f9e5c" stroke-width="2.4"><path d="M1.5 11C5 4.5 9.5 1.5 15 1.5S25 4.5 28.5 11C25 17.5 20.500 20.500 15 20.500S5 17.500 1.500 11Z"/><circle cx="15" cy="11" r="5"/></g></svg>
  <div class="btnl" style="left:929px;top:1849px;background:none">字段属性</div>
  <div class="btnl" style="left:1073px;top:1849px;width:185px;text-align:center">自动计算列宽</div>
  <div style="left:871px;top:1902px;width:426px;height:48px;border-radius:6px;background:#efefef"></div>
  <div style="left:887px;top:1903px;height:47px;line-height:48px;font-size:26.4px;color:#3c3f42;white-space:nowrap;letter-spacing:.25px">分页: pageNum: 1 , pageSize: 50</div>
  <div class="pbtn" style="left:3188px;width:123px"></div>
  <svg style="left:3204px;top:1861px" width="25" height="25" viewBox="0 0 27 27"><circle cx="13.5" cy="13.5" r="13.5" fill="#222"/><path d="M18.6 13.8A5.2 5.2 0 1 1 15.6 8.9" fill="none" stroke="#fff" stroke-width="2.2"/><path d="M13.5 6 17.4 9 13.2 11.5Z" fill="#fff"/></svg>
  <div style="left:3246px;top:1850px;height:47px;line-height:47px;font-size:26.400px;white-space:nowrap;color:#333639">刷新</div>
  <div class="pbtn" style="left:3337px;width:49px;background:#fafafc"></div>
  <svg style="left:3355px;top:1863px" width="13" height="22" viewBox="0 0 13 22"><path d="M11 1.500 2 11 11 20.500" fill="none" stroke="#bdbdbd" stroke-width="2.4"/></svg>
  <div class="pbtn" style="left:3403px;width:49px;border-color:#6cc083;color:#6cc083;text-align:center;line-height:44px;font-size:26.400px">1</div>
  <div class="pbtn" style="left:3469px;width:49px;background:#fafafc"></div>
  <svg style="left:3488px;top:1863px" width="13" height="22" viewBox="0 0 13 22"><path d="M2 1.500 11 11 2 20.500" fill="none" stroke="#bdbdbd" stroke-width="2.4"/></svg>
  <div class="pbtn" style="left:3535px;width:172px"></div>
  <div style="left:3561px;top:1850px;height:47px;line-height:47px;font-size:26.400px;white-space:nowrap;color:#333639;word-spacing:4px;letter-spacing:.8px">50 / 页</div>
  <svg style="left:3661px;top:1867px" width="22" height="13" viewBox="0 0 22 13"><path d="M1.5 1.500 11 11 20.500 1.500" fill="none" stroke="#aaa" stroke-width="2.3"/></svg>
  <div style="left:3000px;top:1900px;width:3707px;width:707px;text-align:right;height:54px;line-height:54px;white-space:pre;color:#333639;letter-spacing:.5px">耗时: 69ms   共 8 条记录(当前页: 8 条)</div>
  <!-- footer buttons -->
  <div class="fbtn" style="left:3254px;width:106px;border:2px solid #dcdcdf;background:#fafafc;line-height:59px;color:#333639">取消</div>
  <div class="fbtn" style="left:3386px;width:106px;background:#6cc083;color:#fff">保存</div>
  <div class="fbtn" style="left:3518px;width:190px;background:#6cc083;color:#fff">保存&amp;关闭</div>
  <svg style="left:3717px;top:2083px" width="22" height="22" viewBox="0 0 24 24"><path d="M23 1V23H1Z" fill="#d4d4d8"/></svg>
  <!-- vertical splitter -->
  <div style="left:851px;top:411px;width:2px;height:1558px;background:#c1e8cf"></div>
  <div style="left:856px;top:1159px;width:2px;height:65px;background:#8fd0a5"></div>
  <div style="left:862px;top:1159px;width:2px;height:65px;background:#8fd0a5"></div>
</div>

</div>
</div>
</body>
</html>
